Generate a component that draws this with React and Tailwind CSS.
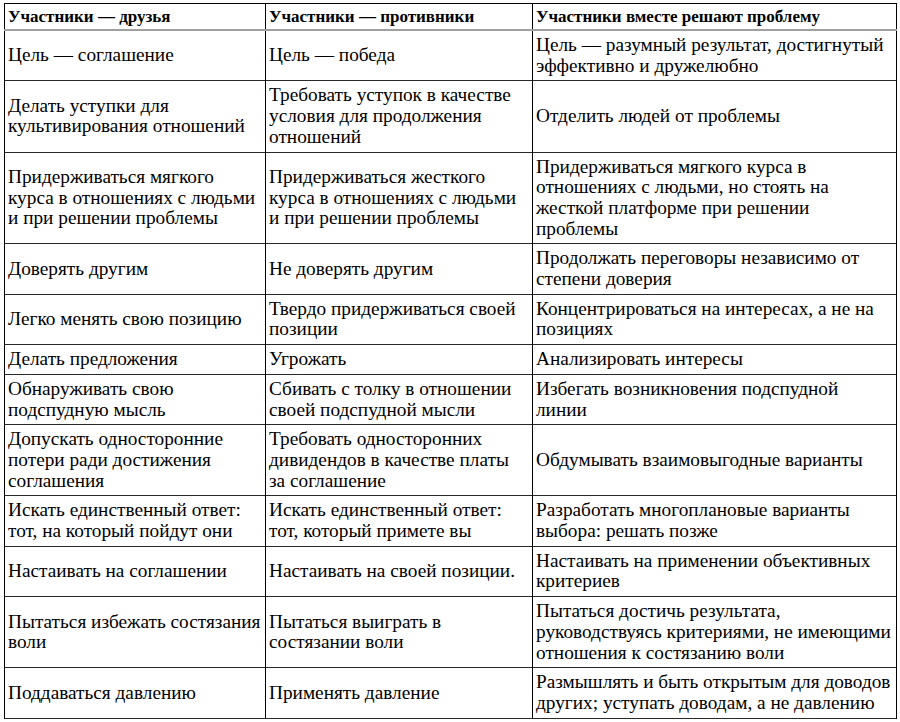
const rows = [
  ["Цель — соглашение", "Цель — победа", "Цель — разумный результат, достигнутый эффективно и дружелюбно"],
  ["Делать уступки для культивирования отношений", "Требовать уступок в качестве условия для продолжения отношений", "Отделить людей от проблемы"],
  ["Придерживаться мягкого курса в отношениях с людьми и при решении проблемы", "Придерживаться жесткого курса в отношениях с людьми и при решении проблемы", "Придерживаться мягкого курса в отношениях с людьми, но стоять на жесткой платформе при решении проблемы"],
  ["Доверять другим", "Не доверять другим", "Продолжать переговоры независимо от степени доверия"],
  ["Легко менять свою позицию", "Твердо придерживаться своей позиции", "Концентрироваться на интересах, а не на позициях"],
  ["Делать предложения", "Угрожать", "Анализировать интересы"],
  ["Обнаруживать свою подспудную мысль", "Сбивать с толку в отношении своей подспудной мысли", "Избегать возникновения подспудной линии"],
  ["Допускать односторонние потери ради достижения соглашения", "Требовать односторонних дивидендов в качестве платы за соглашение", "Обдумывать взаимовыгодные варианты"],
  ["Искать единственный ответ: тот, на который пойдут они", "Искать единственный ответ: тот, который примете вы", "Разработать многоплановые варианты выбора: решать позже"],
  ["Настаивать на соглашении", "Настаивать на своей позиции.", "Настаивать на применении объективных критериев"],
  ["Пытаться избежать состязания воли", "Пытаться выиграть в состязании воли", "Пытаться достичь результата, руководствуясь критериями, не имеющими отношения к состязанию воли"],
  ["Поддаваться давлению", "Применять давление", "Размышлять и быть открытым для доводов других; уступать доводам, а не давлению"],
];

const headers = ["Участники — друзья", "Участники — противники", "Участники вместе решают проблему"];

export default function App() {
  return (
    <div className="min-h-[722px] w-[900px] bg-white pl-[4px] pt-[3px] text-black">
      <table className="w-[892px] table-fixed border-collapse border border-black">
        <colgroup>
          <col className="w-[261px]" />
          <col className="w-[267px]" />
          <col className="w-[364px]" />
        </colgroup>
        <thead>
          <tr className="border-b-2 border-[#a0a0a0]">
            {headers.map((h) => (
              <th
                key={h}
                className="border-x border-black py-[2px] pl-[3px] pr-[3px] text-left align-middle [font-family:'Times_New_Roman','Liberation_Serif',serif] text-[17px] leading-[21px] font-bold"
              >
                {h}
              </th>
            ))}
          </tr>
        </thead>
        <tbody>
          {rows.map((row, i) => (
            <tr key={i} className="border-b border-[#2a2a2a]">
              {row.map((cell, j) => (
                <td
                  key={j}
                  className="border-x border-black py-[4px] pl-[3px] pr-[3px] align-middle [font-family:'Times_New_Roman','Liberation_Serif',serif] text-[19.3px] leading-[20.7px]"
                >
                  {cell}
                </td>
              ))}
            </tr>
          ))}
        </tbody>
      </table>
    </div>
  );
}
